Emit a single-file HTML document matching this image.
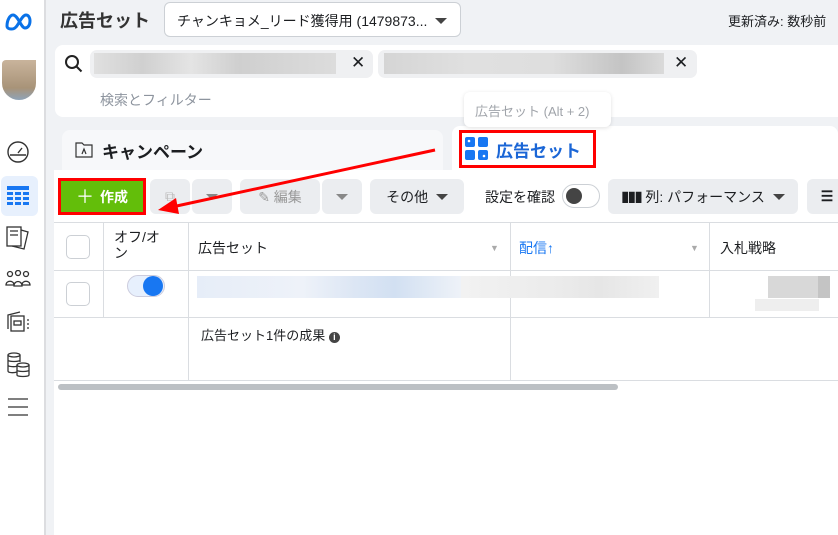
<!DOCTYPE html>
<html><head><meta charset="utf-8"><style>
*{box-sizing:border-box;margin:0;padding:0}
body{width:838px;height:535px;overflow:hidden;background:#f0f2f5;font-family:"Liberation Sans","Noto Sans CJK JP",sans-serif;color:#1c1e21;position:relative;font-size:13px}
.a{position:absolute}
.side{left:0;top:0;width:46px;height:535px;background:#fff;border-right:2px solid #dcdde0}
.btn{position:absolute;top:179px;height:35px;background:#ebedf0;border-radius:6px;display:flex;align-items:center;justify-content:center;font-size:14px}
.tri{width:0;height:0;border-left:6px solid transparent;border-right:6px solid transparent;border-top:6px solid #444}
.cb{position:absolute;width:24px;height:24px;border:1px solid #ccd0d5;border-radius:5px;background:#fff}
.vl{position:absolute;width:1px;background:#dadde1}
.hl{position:absolute;height:1px;background:#dadde1}
</style></head><body>
<div class="a side">
<svg class="a" style="left:4px;top:12px" width="30" height="20" viewBox="0 0 30 20"><path d="M3 14c0-6 3-11 6-11 5 0 8 13 12 13 3 0 5-3 5-7s-2-6-4-6c-4 0-7 9-10 12-2 2-3 2-5 2s-4-1-4-3z" fill="none" stroke="#0a72e8" stroke-width="3"/></svg>
<div class="a" style="left:2px;top:60px;width:34px;height:40px;background:linear-gradient(#c9b49c,#a89378 70%,#8fa3b8);border-radius:4px 0 17px 17px"></div>
<svg class="a" style="left:6px;top:140px" width="24" height="24" viewBox="0 0 24 24" fill="none" stroke="#333" stroke-width="1.4"><circle cx="12" cy="12" r="10"/><path d="M12 13l4-5M4 15h16"/></svg>
<div class="a" style="left:1px;top:176px;width:37px;height:40px;background:#e7f0fd;border-radius:6px"></div>
<svg class="a" style="left:7px;top:186px" width="22" height="19" viewBox="0 0 22 19" fill="#1877f2"><rect x="0" y="0" width="22" height="4"/><rect x="0" y="6" width="6" height="3"/><rect x="8" y="6" width="6" height="3"/><rect x="16" y="6" width="6" height="3"/><rect x="0" y="11" width="6" height="3"/><rect x="8" y="11" width="6" height="3"/><rect x="16" y="11" width="6" height="3"/><rect x="0" y="16" width="6" height="3"/><rect x="8" y="16" width="6" height="3"/><rect x="16" y="16" width="6" height="3"/></svg>
<svg class="a" style="left:6px;top:226px" width="24" height="24" viewBox="0 0 24 24" fill="none" stroke="#333" stroke-width="1.3"><rect x="1" y="1" width="14" height="19"/><path d="M15 4l7 2-4 17-12-3M4 5h8M4 9h8"/></svg>
<svg class="a" style="left:5px;top:270px" width="26" height="20" viewBox="0 0 26 20" fill="none" stroke="#333" stroke-width="1.3"><circle cx="5" cy="4" r="2.5"/><circle cx="13" cy="3" r="2.5"/><circle cx="21" cy="4" r="2.5"/><path d="M1 15c0-5 8-5 8 0zM9 16c0-6 8-6 8 0zM17 15c0-5 8-5 8 0z"/></svg>
<svg class="a" style="left:5px;top:310px" width="26" height="24" viewBox="0 0 26 24" fill="none" stroke="#333" stroke-width="1.3"><path d="M3 19V5l12-3"/><rect x="6" y="6" width="13" height="15"/><rect x="9" y="11" width="7" height="4"/><path d="M22 10h2M22 14h2M22 18h2"/></svg>
<svg class="a" style="left:6px;top:352px" width="24" height="26" viewBox="0 0 24 26" fill="none" stroke="#333" stroke-width="1.3"><ellipse cx="8" cy="3" rx="6" ry="2"/><path d="M2 3v16c0 2 6 2 9 1M2 8c0 2 12 2 12 0M2 13c0 2 8 2 9 1M14 3v7"/><ellipse cx="17" cy="13" rx="6" ry="2"/><path d="M11 13v10c0 2 12 2 12 0V13M11 18c0 2 12 2 12 0"/></svg>
<svg class="a" style="left:8px;top:398px" width="20" height="18" viewBox="0 0 20 18" stroke="#333" stroke-width="1.3"><path d="M0 1h20M0 9h20M0 17h20"/></svg>
</div>
<div class="a" style="left:60px;top:7px;font-size:18px;font-weight:bold;color:#333">広告セット</div>
<div class="a" style="left:164px;top:2px;width:297px;height:35px;background:#fff;border:1px solid #ccd0d5;border-radius:6px;font-size:14px;padding:8px 12px;color:#1c1e21;white-space:nowrap">チャンキョメ_リード獲得用 (1479873...<div class="tri a" style="left:270px;top:15px"></div></div>
<div class="a" style="left:728px;top:11px;font-size:13px">更新済み: 数秒前</div>
<div class="a" style="left:55px;top:45px;width:790px;height:72px;background:#fff;border-radius:8px"></div>
<svg class="a" style="left:64px;top:54px" width="20" height="20" viewBox="0 0 20 20" fill="none" stroke="#222" stroke-width="2"><circle cx="8" cy="8" r="6"/><path d="M12.5 12.5l5 5"/></svg>
<div class="a" style="left:90px;top:50px;width:283px;height:28px;background:#eff0f2;border-radius:7px"></div>
<div class="a" style="left:94px;top:53px;width:242px;height:21px;background:linear-gradient(90deg,#e0e0e0,#d0d0d0 20%,#e4e4e4 40%,#cfcfcf 60%,#d6d6d6 80%,#dcdcdc)"></div>
<div class="a" style="left:351px;top:53px;font-size:17px">✕</div>
<div class="a" style="left:378px;top:50px;width:319px;height:28px;background:#eff0f2;border-radius:7px"></div>
<div class="a" style="left:384px;top:53px;width:280px;height:21px;background:linear-gradient(90deg,#d5d5d5,#e0e0e0 30%,#dedede 60%,#c4c4c4 85%,#dadada)"></div>
<div class="a" style="left:674px;top:53px;font-size:17px">✕</div>
<div class="a" style="left:100px;top:90px;color:#8d949e;font-size:14px">検索とフィルター</div>
<div class="a" style="left:62px;top:130px;width:381px;height:45px;background:#f7f8fa;border-radius:8px 8px 0 0"></div>
<svg class="a" style="left:75px;top:142px" width="18" height="16" viewBox="0 0 18 16" fill="none" stroke="#333" stroke-width="1.2"><path d="M1 1h6l2 2h8v12H1z"/><path d="M7 12l2-5 2 5"/></svg>
<div class="a" style="left:102px;top:138px;font-size:17px;font-weight:bold">キャンペーン</div>
<div class="a" style="left:452px;top:126px;width:386px;height:50px;background:#fff;border-radius:8px 8px 0 0"></div>
<div class="a" style="left:464px;top:92px;width:147px;height:35px;background:#fff;border-radius:6px;box-shadow:0 1px 4px rgba(0,0,0,.12);color:#a0a4aa;font-size:13px;padding:9px 11px;white-space:nowrap">広告セット (Alt + 2)</div>
<div class="a" style="left:459px;top:130px;width:137px;height:38px;border:3px solid #f00"></div>
<svg class="a" style="left:465px;top:137px" width="23" height="23" viewBox="0 0 23 23" fill="#1877f2"><rect x="0" y="0" width="10" height="10" rx="2"/><rect x="13" y="0" width="10" height="10" rx="2"/><rect x="0" y="13" width="10" height="10" rx="2"/><rect x="13" y="13" width="10" height="10" rx="2"/><circle cx="4" cy="4" r="1.3" fill="#fff"/><circle cx="19" cy="19" r="1.3" fill="#fff"/></svg>
<div class="a" style="left:496px;top:137px;font-size:17px;font-weight:bold;color:#1b66d6">広告セット</div>
<div class="a" style="left:54px;top:170px;width:784px;height:365px;background:#fff"></div>
<div class="a" style="left:58px;top:178px;width:88px;height:37px;border:3px solid #f00;background:#63be0a;color:#fff;font-weight:bold;font-size:14px;display:flex;align-items:center;justify-content:center;gap:6px"><span style="font-size:18px;font-weight:normal;line-height:1">＋</span><span>作成</span></div>
<div class="btn" style="left:150px;width:40px;color:#bbb">⧉</div>
<div class="btn" style="left:192px;width:40px"><div class="tri" style="border-top-color:#888"></div></div>
<div class="btn" style="left:240px;width:80px;color:#999">✎ 編集</div>
<div class="btn" style="left:322px;width:40px"><div class="tri" style="border-top-color:#888"></div></div>
<div class="btn" style="left:370px;width:94px">その他&nbsp;&nbsp;<div class="tri"></div></div>
<div class="a" style="left:485px;top:187px;font-size:14px">設定を確認</div>
<div class="a" style="left:562px;top:184px;width:38px;height:24px;border:1px solid #ccd0d5;border-radius:12px"><div class="a" style="left:3px;top:3px;width:16px;height:16px;border-radius:50%;background:#444"></div></div>
<div class="btn" style="left:608px;width:190px"><b style="letter-spacing:-1px">▮▮▮</b>&nbsp;列: パフォーマンス&nbsp;&nbsp;<div class="tri"></div></div>
<div class="btn" style="left:807px;width:40px;font-weight:bold">☰</div>
<div class="hl" style="left:54px;top:222px;width:784px"></div>
<div class="hl" style="left:54px;top:270px;width:784px"></div>
<div class="hl" style="left:54px;top:317px;width:784px"></div>
<div class="hl" style="left:54px;top:380px;width:784px"></div>
<div class="vl" style="left:103px;top:222px;height:95px"></div>
<div class="vl" style="left:188px;top:222px;height:158px"></div>
<div class="vl" style="left:510px;top:222px;height:158px"></div>
<div class="vl" style="left:709px;top:222px;height:95px"></div>
<div class="cb" style="left:66px;top:235px"></div>
<div class="cb" style="left:66px;top:282px"></div>
<div class="a" style="left:114px;top:229px;font-size:14px;line-height:16px">オフ/オ<br>ン</div>
<div class="a" style="left:198px;top:238px;font-size:14px">広告セット</div>
<div class="a" style="left:490px;top:243px;font-size:9px;color:#aaa">▼</div>
<div class="a" style="left:519px;top:238px;font-size:14px;color:#1877f2">配信↑</div>
<div class="a" style="left:690px;top:243px;font-size:9px;color:#aaa">▼</div>
<div class="a" style="left:720px;top:238px;font-size:14px">入札戦略</div>
<div class="a" style="left:127px;top:275px;width:38px;height:22px;border-radius:11px;background:#e7f0fd;border:1px solid #ccd;"><div class="a" style="right:1px;top:0;width:20px;height:20px;border-radius:50%;background:#1877f2"></div></div>
<div class="a" style="left:197px;top:276px;width:264px;height:22px;background:linear-gradient(90deg,#e6edf8,#eef2f9 40%,#dce6f4 60%,#d2e0f2 75%,#eef2f8)"></div>
<div class="a" style="left:461px;top:276px;width:198px;height:22px;background:linear-gradient(90deg,#f2f2f2,#ebebeb 50%,#e6e6e6 70%,#f0f0f0)"></div>
<div class="a" style="left:768px;top:276px;width:50px;height:22px;background:#d8d8d8"></div>
<div class="a" style="left:818px;top:276px;width:12px;height:22px;background:#c4c4c4"></div>
<div class="a" style="left:755px;top:299px;width:64px;height:12px;background:#eee"></div>
<div class="a" style="left:201px;top:325px;font-size:13px">広告セット1件の成果 <span style="display:inline-block;width:11px;height:11px;border-radius:50%;background:#444;color:#fff;font-size:9px;text-align:center;line-height:11px;font-weight:bold">i</span></div>
<div class="a" style="left:58px;top:384px;width:560px;height:6px;border-radius:3px;background:#bcc0c4"></div>
<svg class="a" style="left:0;top:0" width="838" height="535"><line x1="435" y1="150" x2="172" y2="207" stroke="#f00" stroke-width="3"/><polygon points="158,210 176,198 179,214" fill="#f00"/></svg>
</body></html>
